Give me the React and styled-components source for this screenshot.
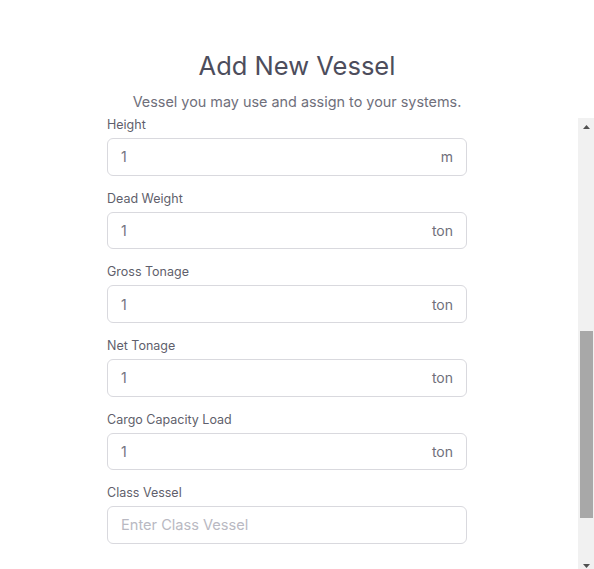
import { useEffect, useRef } from "react";
import styled, { createGlobalStyle } from "styled-components";

const fields = [
  { label: "Vessel Name", placeholder: "Enter Vessel Name" },
  { label: "IMO Number", placeholder: "Enter IMO Number" },
  { label: "MMSI", placeholder: "Enter MMSI" },
  { label: "Call Sign", placeholder: "Enter Call Sign" },
  { label: "Flag", placeholder: "Enter Flag" },
  { label: "Length", value: "1", unit: "m" },
  { label: "Width", value: "1", unit: "m" },
  { label: "Height", value: "1", unit: "m" },
  { label: "Dead Weight", value: "1", unit: "ton" },
  { label: "Gross Tonage", value: "1", unit: "ton" },
  { label: "Net Tonage", value: "1", unit: "ton" },
  { label: "Cargo Capacity Load", value: "1", unit: "ton" },
  { label: "Class Vessel", placeholder: "Enter Class Vessel" },
];

const Arrow = ({ down }) => (
  <svg width="7" height="4" viewBox="0 0 7 4">
    <path d={down ? "M0 0 L7 0 L3.5 4 Z" : "M0 4 L7 4 L3.5 0 Z"} fill="#505050" />
  </svg>
);

const App = () => {
  const scrollRef = useRef(null);

  useEffect(() => {
    // keep the list where the screenshot shows it
    if (scrollRef.current) scrollRef.current.scrollTop = 517;
  }, []);

  return (
    <>
      <GlobalStyle />
      <Page>
        <Head>
          <Title>Add New Vessel</Title>
          <Subtitle>Vessel you may use and assign to your systems.</Subtitle>
        </Head>
        <Body>
          <Viewport ref={scrollRef}>
            <Form>
              {fields.map((f) => (
                <Field key={f.label}>
                  <Label>{f.label}</Label>
                  <InputBox>
                    <Input
                      defaultValue={f.value}
                      placeholder={f.placeholder}
                    />
                    {f.unit && <Unit>{f.unit}</Unit>}
                  </InputBox>
                </Field>
              ))}
            </Form>
          </Viewport>
          <Scrollbar>
            <ScrollButton>
              <Arrow />
            </ScrollButton>
            <Track>
              <Thumb />
            </Track>
            <ScrollButton $down>
              <Arrow down />
            </ScrollButton>
          </Scrollbar>
        </Body>
      </Page>
    </>
  );
};

export default App;

const GlobalStyle = createGlobalStyle`
  body {
    margin: 0;
    background: #ffffff;
    font-family: Inter, "Noto Sans", sans-serif;
  }
`;

// PAGE
const Page = styled.div`
  display: flex;
  flex-direction: column;
  height: 569px;
  background: #ffffff;
  overflow: hidden;
`;

// HEADER
const Head = styled.div`
  display: flex;
  flex-direction: column;
  align-items: center;
  padding-top: 50px;
  height: 68px;
  flex-shrink: 0;
`;

const Title = styled.h2`
  margin: 0;
  font-size: 25.5px;
  font-weight: 400;
  line-height: 32px;
  color: #4d4d5c;
`;

const Subtitle = styled.p`
  margin: 10px 0 0;
  font-size: 14.4px;
  line-height: 20px;
  color: #6f6f7b;
`;

// SCROLLING BODY
const Body = styled.div`
  display: flex;
  flex: 1;
  min-height: 0;
`;

const Viewport = styled.div`
  flex: 1;
  overflow: hidden;
`;

const Form = styled.div`
  display: flex;
  flex-direction: column;
  width: 360px;
  padding-left: 107px;
  padding-bottom: 90px;
`;

const Field = styled.div`
  display: flex;
  flex-direction: column;
  gap: 4px;
  margin-bottom: 14px;
`;

const Label = styled.label`
  font-size: 12.5px;
  line-height: 18px;
  color: #5f5f6c;
`;

const InputBox = styled.div`
  display: flex;
  align-items: center;
  height: 37.6px;
  box-sizing: border-box;
  border: 1px solid #d9d9de;
  border-radius: 6px;
  padding: 0 13px;
`;

const Input = styled.input`
  flex: 1;
  min-width: 0;
  border: none;
  outline: none;
  background: transparent;
  padding: 0;
  font-family: Inter, "Noto Sans", sans-serif;
  font-size: 14px;
  color: #74747f;
  &::placeholder {
    font-size: 14.6px;
    color: #b9b9c2;
  }
`;

const Unit = styled.span`
  font-size: 14px;
  color: #6f6f7b;
`;

// SCROLLBAR
const Scrollbar = styled.div`
  display: flex;
  flex-direction: column;
  width: 16px;
  flex-shrink: 0;
  background: #f1f1f1;
`;

const ScrollButton = styled.div`
  display: flex;
  justify-content: center;
  align-items: ${(p) => (p.$down ? "flex-end" : "flex-start")};
  height: 16px;
  padding: ${(p) => (p.$down ? "0 0 1px 1px" : "7px 0 0 1px")};
  box-sizing: border-box;
`;

const Track = styled.div`
  flex: 1;
  display: flex;
  flex-direction: column;
`;

const Thumb = styled.div`
  width: 13px;
  height: 187px;
  margin: 197px 0 0 2px;
  background: #a8a8a8;
`;
